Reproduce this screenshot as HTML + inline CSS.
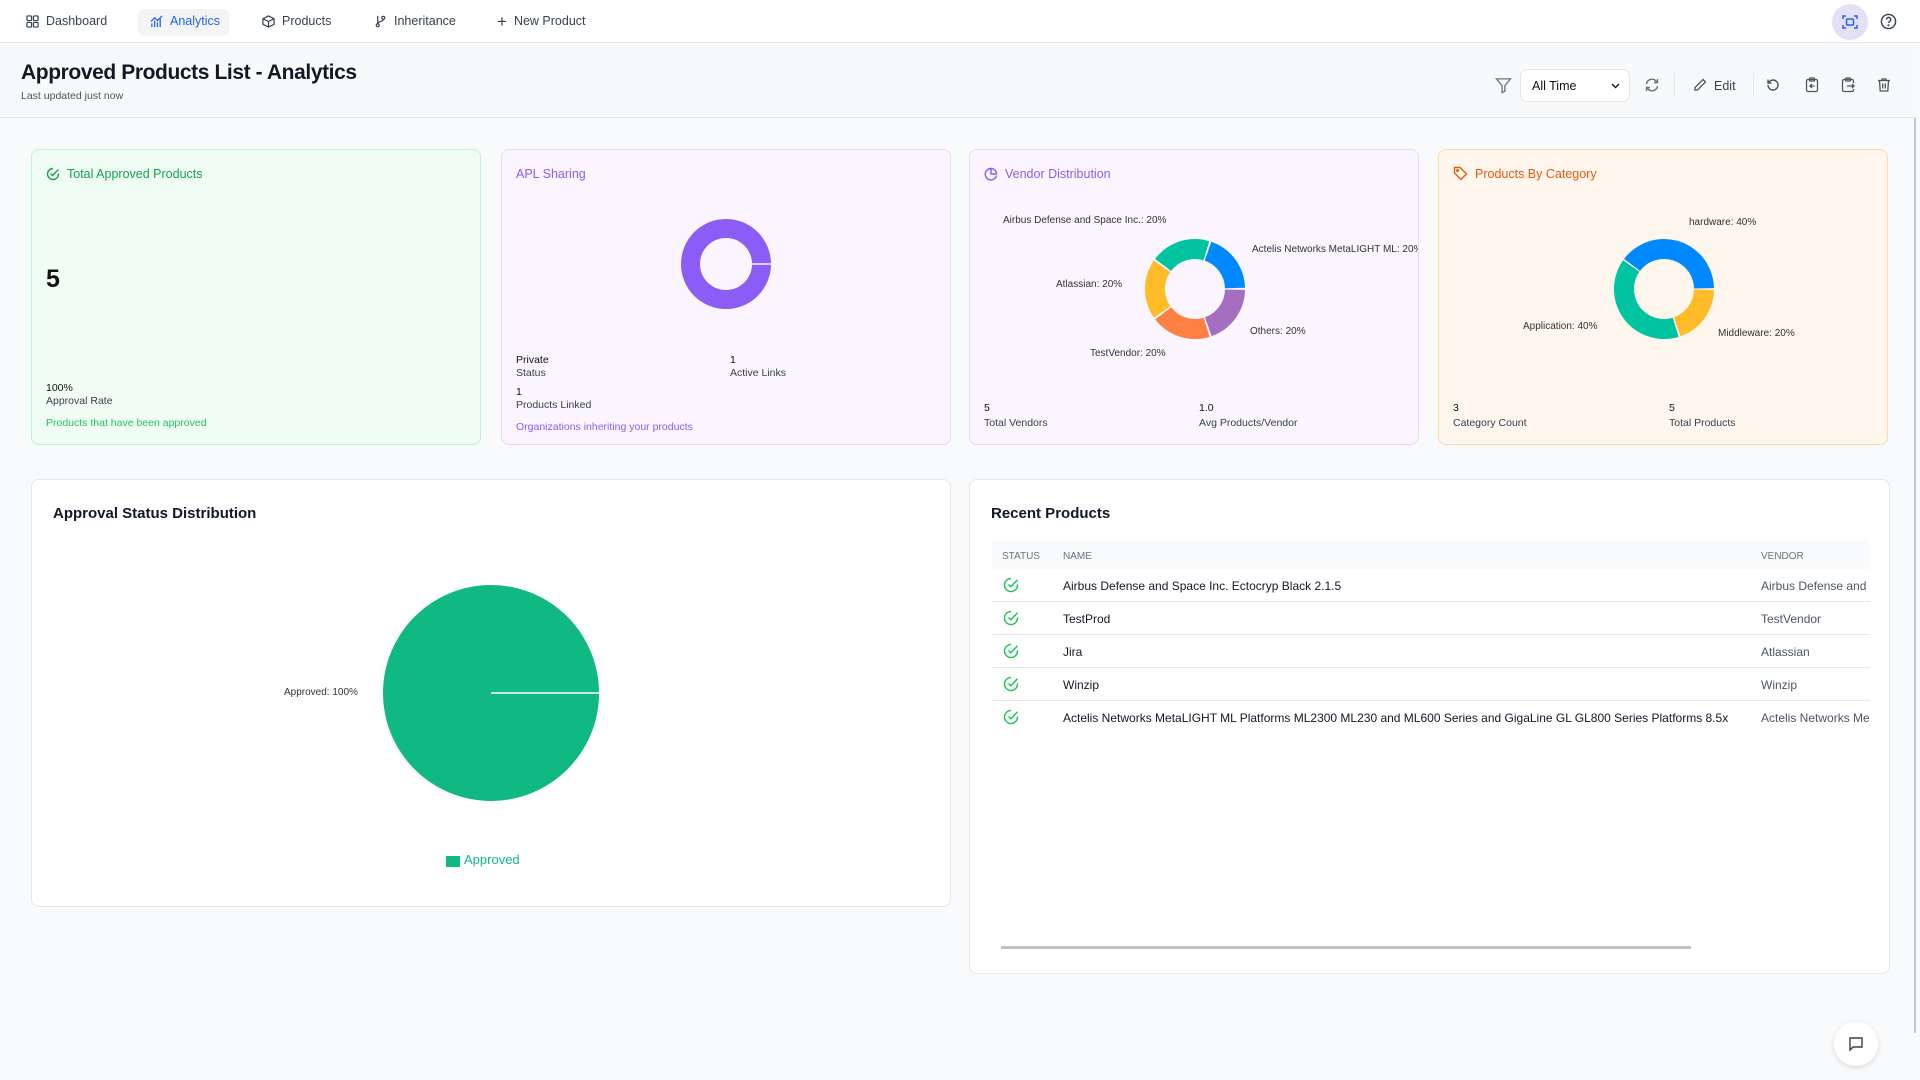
<!DOCTYPE html>
<html><head><meta charset="utf-8"><style>
*{box-sizing:border-box;margin:0;padding:0}
body{width:1920px;height:1080px;overflow:hidden;background:#f9fafb;font-family:"Liberation Sans",sans-serif;color:#111827;position:relative}
.a{position:absolute}
.nav{position:absolute;left:0;top:0;width:1920px;height:43px;background:#fff;border-bottom:1px solid #e5e7eb}
.ni{position:absolute;top:14px;font-size:12.5px;color:#374151;display:flex;align-items:center;gap:7px}
.hdr{position:absolute;left:0;top:43px;width:1916px;height:75px;background:#f8f9fb;border-bottom:1px solid #e5e7eb}
.card{position:absolute;top:149px;width:450px;height:296px;border-radius:8px;border:1.5px solid}
.t{position:absolute;font-size:12.5px;white-space:nowrap}
.s{position:absolute;font-size:10.5px;color:#374151;white-space:nowrap}
.lab{position:absolute;font-size:10px;color:#333;white-space:nowrap}
.panel{position:absolute;background:#fff;border:1px solid #e5e7eb;border-radius:8px;top:479px}
.row{position:absolute;left:22px;width:878px;height:33px;border-bottom:1px solid #e5e7eb;font-size:12px;color:#111827}
.row span{position:absolute;top:10px;white-space:nowrap}
</style></head><body>
<div class="nav">
 <div class="ni" style="left:26px"><svg width="13" height="13" viewBox="0 0 14 14" fill="none" stroke="#374151" stroke-width="1.3"><rect x="1" y="1" width="5" height="5" rx="1"/><rect x="8" y="1" width="5" height="5" rx="1"/><rect x="1" y="8" width="5" height="5" rx="1"/><rect x="8" y="8" width="5" height="5" rx="1"/></svg>Dashboard</div>
 <div class="a" style="left:138px;top:9px;width:91px;height:27px;background:#f3f4f6;border-radius:6px"></div>
 <div class="ni" style="left:150px;color:#2563eb"><svg width="13" height="13" viewBox="0 0 14 14" fill="none" stroke="#2563eb" stroke-width="1.4"><path d="M2 13V9M5 13V6M8 13V8M11 13V4M1 7l4-4 3 3 5-5"/></svg>Analytics</div>
 <div class="ni" style="left:262px"><svg width="13" height="13" viewBox="0 0 14 14" fill="none" stroke="#374151" stroke-width="1.3"><path d="M7 1l6 3v6l-6 3-6-3V4zM1 4l6 3 6-3M7 7v6"/></svg>Products</div>
 <div class="ni" style="left:374px"><svg width="13" height="13" viewBox="0 0 14 14" fill="none" stroke="#374151" stroke-width="1.3"><circle cx="4" cy="11" r="1.6"/><circle cx="10" cy="3" r="1.6"/><path d="M4 1v8.4M10 4.6c0 3-6 2-6 5"/></svg>Inheritance</div>
 <div class="ni" style="left:497px"><span style="font-size:17px;line-height:13px">+</span>New Product</div>
 <div class="a" style="left:1832px;top:4px;width:36px;height:36px;border-radius:50%;background:#e4e0f8"></div>
 <svg class="a" style="left:1842px;top:14px" width="16" height="16" viewBox="0 0 16 16" fill="none" stroke="#2563eb" stroke-width="1.5"><path d="M1 5V2h3M12 2h3v3M15 11v3h-3M4 14H1v-3"/><rect x="4.5" y="5" width="7" height="6" rx="1"/></svg>
 <svg class="a" style="left:1880px;top:13px" width="17" height="17" viewBox="0 0 18 18" fill="none" stroke="#374151" stroke-width="1.5"><circle cx="9" cy="9" r="7.5"/><path d="M6.8 7a2.3 2.3 0 114 1.5c-.8.6-1.8 1-1.8 2"/><circle cx="9" cy="13" r=".4" fill="#374151"/></svg>
</div>
<div class="a" style="left:1914px;top:43px;width:2px;height:990px;background:#c8c8c8"></div>
<div class="hdr">
 <div class="a" style="left:21px;top:18px;font-size:21px;font-weight:bold;color:#111827;letter-spacing:-0.4px">Approved Products List - Analytics</div>
 <div class="a" style="left:21px;top:47px;font-size:10.5px;color:#4b5563">Last updated just now</div>
 <svg class="a" style="left:1495px;top:34px" width="17" height="17" viewBox="0 0 18 18" fill="none" stroke="#6b7280" stroke-width="1.4"><path d="M1.5 2h15l-6 7v6l-3 1.5V9z"/></svg>
 <div class="a" style="left:1520px;top:26px;width:110px;height:33px;background:#fff;border:1px solid #e5e7eb;border-radius:7px;font-size:12.5px;padding:9px 11px;color:#111">All Time<svg style="position:absolute;right:9px;top:13px" width="9" height="6" viewBox="0 0 9 6" fill="none" stroke="#111" stroke-width="1.4"><path d="M1 1l3.5 3.5L8 1"/></svg></div>
 <svg class="a" style="left:1644px;top:34px" width="16" height="16" viewBox="0 0 16 16" fill="none" stroke="#6b7280" stroke-width="1.4"><path d="M2.5 7a5.5 5.5 0 019.5-3l1.5 1.5M13.5 9A5.5 5.5 0 014 12l-1.5-1.5M13.5 2v3.5H10M2.5 14v-3.5H6"/></svg>
 <div class="a" style="left:1674px;top:30px;width:1px;height:24px;background:#e5e7eb"></div>
 <svg class="a" style="left:1693px;top:35px" width="14" height="14" viewBox="0 0 14 14" fill="none" stroke="#4b5563" stroke-width="1.3"><path d="M10 1.5l2.5 2.5L4.5 12H2v-2.5z"/></svg>
 <div class="a" style="left:1714px;top:36px;font-size:12.5px;color:#374151">Edit</div>
 <div class="a" style="left:1753px;top:30px;width:1px;height:24px;background:#e5e7eb"></div>
 <svg class="a" style="left:1766px;top:35px" width="14" height="14" viewBox="0 0 14 14" fill="none" stroke="#4b5563" stroke-width="1.4"><path d="M2 7a5 5 0 105-5 5 5 0 00-3.5 1.5L2 5M2 1.5V5h3.5"/></svg>
 <svg class="a" style="left:1805px;top:34px" width="14" height="16" viewBox="0 0 14 16" fill="none" stroke="#4b5563" stroke-width="1.3"><rect x="1.5" y="2.5" width="11" height="12" rx="1.5"/><rect x="4.5" y="1" width="5" height="3" rx=".8"/><path d="M9.5 9H5M7 7L5 9l2 2"/></svg>
 <svg class="a" style="left:1841px;top:34px" width="14" height="16" viewBox="0 0 14 16" fill="none" stroke="#4b5563" stroke-width="1.3"><path d="M12.5 6V4a1.5 1.5 0 00-1.5-1.5H3A1.5 1.5 0 001.5 4v9A1.5 1.5 0 003 14.5h8a1.5 1.5 0 001.5-1.5v-1"/><rect x="4.5" y="1" width="5" height="3" rx=".8"/><path d="M6 9h7M11 7l2 2-2 2"/></svg>
 <svg class="a" style="left:1877px;top:34px" width="14" height="16" viewBox="0 0 14 16" fill="none" stroke="#4b5563" stroke-width="1.3"><path d="M1 3.5h12M5 3.5V2h4v1.5M2.5 3.5l.7 10.5h7.6l.7-10.5M5.7 6.5v5M8.3 6.5v5"/></svg>
</div>

<!-- card 1 -->
<div class="card" style="left:31px;background:#f0fdf4;border-color:#bbf7d0">
 <svg class="a" style="left:14px;top:17px" width="14" height="14" viewBox="0 0 14 14" fill="none" stroke="#16a34a" stroke-width="1.4"><path d="M12.5 6.5V7A5.5 5.5 0 117 1.5"/><path d="M4.5 6.5l2 2 6-6"/></svg>
 <div class="t" style="left:35px;top:17px;color:#16a34a">Total Approved Products</div>
 <div class="a" style="left:14px;top:115px;font-size:25px;font-weight:bold;color:#111">5</div>
 <div class="s" style="left:14px;top:232px;color:#111">100%</div>
 <div class="s" style="left:14px;top:245px">Approval Rate</div>
 <div class="s" style="left:14px;top:267px;color:#22c55e">Products that have been approved</div>
</div>
<!-- card 2 -->
<div class="card" style="left:501px;background:#faf5ff;border-color:#e9d5ff">
 <div class="t" style="left:14px;top:17px;color:#8b5cf6">APL Sharing</div>
 <svg class="a" style="left:0;top:0" width="450" height="296"><g transform="translate(224,114)"><circle r="35.5" fill="none" stroke="#8b5cf6" stroke-width="19"/><line x1="26" y1="0" x2="46" y2="0" stroke="#faf5ff" stroke-width="1.5"/></g></svg>
 <div class="s" style="left:14px;top:204px;color:#111">Private</div>
 <div class="s" style="left:14px;top:217px">Status</div>
 <div class="s" style="left:228px;top:204px;color:#111">1</div>
 <div class="s" style="left:228px;top:217px">Active Links</div>
 <div class="s" style="left:14px;top:236px;color:#111">1</div>
 <div class="s" style="left:14px;top:249px">Products Linked</div>
 <div class="s" style="left:14px;top:271px;color:#8b5cf6">Organizations inheriting your products</div>
</div>
<!-- card 3 -->
<div class="card" style="left:969px;background:#faf5ff;border-color:#e9d5ff;overflow:hidden">
 <svg class="a" style="left:14px;top:17px" width="14" height="14" viewBox="0 0 14 14" fill="none" stroke="#8b5cf6" stroke-width="1.4"><path d="M12.5 8.5A5.7 5.7 0 117 1.5"/><path d="M7 1.5A5.5 5.5 0 0112.5 7H7z"/></svg>
 <div class="t" style="left:35px;top:17px;color:#8b5cf6">Vendor Distribution</div>
 <svg class="a" style="left:0;top:0" width="450" height="296"><g transform="translate(225,139)" fill="none" stroke-width="20">
  <circle r="40" stroke="#0088FE" stroke-dasharray="48.5 300" transform="rotate(289)"/>
  <circle r="40" stroke="#a46fc0" stroke-dasharray="48.5 300" transform="rotate(1)"/>
  <circle r="40" stroke="#FF8042" stroke-dasharray="48.5 300" transform="rotate(73)"/>
  <circle r="40" stroke="#FFBB28" stroke-dasharray="48.5 300" transform="rotate(145)"/>
  <circle r="40" stroke="#00C49F" stroke-dasharray="48.5 300" transform="rotate(217)"/>
 </g></svg>
 <div class="lab" style="left:33px;top:65px">Airbus Defense and Space Inc.: 20%</div>
 <div class="lab" style="left:282px;top:94px">Actelis Networks MetaLIGHT ML: 20%</div>
 <div class="lab" style="left:86px;top:129px">Atlassian: 20%</div>
 <div class="lab" style="left:280px;top:176px">Others: 20%</div>
 <div class="lab" style="left:120px;top:198px">TestVendor: 20%</div>
 <div class="s" style="left:14px;top:252px;color:#111">5</div>
 <div class="s" style="left:14px;top:267px">Total Vendors</div>
 <div class="s" style="left:229px;top:252px;color:#111">1.0</div>
 <div class="s" style="left:229px;top:267px">Avg Products/Vendor</div>
</div>
<!-- card 4 -->
<div class="card" style="left:1438px;background:#fff7ed;border-color:#fed7aa">
 <svg class="a" style="left:14px;top:16px" width="15" height="15" viewBox="0 0 15 15" fill="none" stroke="#ea580c" stroke-width="1.4"><path d="M1.5 1.5h5.5l6.5 6.5-5.5 5.5L1.5 7z"/><circle cx="4.5" cy="4.5" r=".8"/></svg>
 <div class="t" style="left:36px;top:17px;color:#ea580c">Products By Category</div>
 <svg class="a" style="left:0;top:0" width="450" height="296"><g transform="translate(225,139)" fill="none" stroke-width="20">
  <circle r="40" stroke="#0088FE" stroke-dasharray="99 300" transform="rotate(217)"/>
  <circle r="40" stroke="#00C49F" stroke-dasharray="99 300" transform="rotate(73)"/>
  <circle r="40" stroke="#FFBB28" stroke-dasharray="48.5 300" transform="rotate(1)"/>
 </g></svg>
 <div class="lab" style="left:250px;top:67px">hardware: 40%</div>
 <div class="lab" style="left:84px;top:171px">Application: 40%</div>
 <div class="lab" style="left:279px;top:178px">Middleware: 20%</div>
 <div class="s" style="left:14px;top:252px;color:#111">3</div>
 <div class="s" style="left:14px;top:267px">Category Count</div>
 <div class="s" style="left:230px;top:252px;color:#111">5</div>
 <div class="s" style="left:230px;top:267px">Total Products</div>
</div>

<!-- bottom left -->
<div class="panel" style="left:31px;width:920px;height:428px">
 <div class="a" style="left:21px;top:25px;font-size:15px;font-weight:bold">Approval Status Distribution</div>
 <svg class="a" style="left:0;top:0" width="920" height="428"><circle cx="459" cy="213" r="108" fill="#10b981"/><line x1="459" y1="213" x2="567" y2="213" stroke="#fff" stroke-width="1.5"/></svg>
 <div class="lab" style="left:252px;top:207px;color:#333">Approved: 100%</div>
 <div class="a" style="left:414px;top:376px;width:14px;height:11px;background:#10b981"></div>
 <div class="a" style="left:432px;top:372px;font-size:13px;color:#10b981">Approved</div>
</div>

<!-- bottom right -->
<div class="panel" style="left:969px;width:921px;height:495px;overflow:hidden">
 <div class="a" style="left:21px;top:25px;font-size:15px;font-weight:bold">Recent Products</div>
 <div class="a" style="left:22px;top:61px;width:878px;height:28px;background:#f9fafb;font-size:10px;color:#6b7280">
  <span class="a" style="left:10px;top:10px">STATUS</span><span class="a" style="left:71px;top:10px">NAME</span><span class="a" style="left:769px;top:10px">VENDOR</span>
 </div>
 <div class="row" style="top:89px"><svg class="a" style="left:11px;top:8px" width="16" height="16" viewBox="0 0 16 16" fill="none" stroke="#22c55e" stroke-width="1.5"><path d="M14.5 7.4V8A6.5 6.5 0 118 1.5"/><path d="M5.5 7.5l2.3 2.3 6.7-7"/></svg><span style="left:71px">Airbus Defense and Space Inc. Ectocryp Black 2.1.5</span><span style="left:769px;color:#4b5563">Airbus Defense and</span></div>
 <div class="row" style="top:122px"><svg class="a" style="left:11px;top:8px" width="16" height="16" viewBox="0 0 16 16" fill="none" stroke="#22c55e" stroke-width="1.5"><path d="M14.5 7.4V8A6.5 6.5 0 118 1.5"/><path d="M5.5 7.5l2.3 2.3 6.7-7"/></svg><span style="left:71px">TestProd</span><span style="left:769px;color:#4b5563">TestVendor</span></div>
 <div class="row" style="top:155px"><svg class="a" style="left:11px;top:8px" width="16" height="16" viewBox="0 0 16 16" fill="none" stroke="#22c55e" stroke-width="1.5"><path d="M14.5 7.4V8A6.5 6.5 0 118 1.5"/><path d="M5.5 7.5l2.3 2.3 6.7-7"/></svg><span style="left:71px">Jira</span><span style="left:769px;color:#4b5563">Atlassian</span></div>
 <div class="row" style="top:188px"><svg class="a" style="left:11px;top:8px" width="16" height="16" viewBox="0 0 16 16" fill="none" stroke="#22c55e" stroke-width="1.5"><path d="M14.5 7.4V8A6.5 6.5 0 118 1.5"/><path d="M5.5 7.5l2.3 2.3 6.7-7"/></svg><span style="left:71px">Winzip</span><span style="left:769px;color:#4b5563">Winzip</span></div>
 <div class="row" style="top:221px;border-bottom:none"><svg class="a" style="left:11px;top:8px" width="16" height="16" viewBox="0 0 16 16" fill="none" stroke="#22c55e" stroke-width="1.5"><path d="M14.5 7.4V8A6.5 6.5 0 118 1.5"/><path d="M5.5 7.5l2.3 2.3 6.7-7"/></svg><span style="left:71px">Actelis Networks MetaLIGHT ML Platforms ML2300 ML230 and ML600 Series and GigaLine GL GL800 Series Platforms 8.5x</span><span style="left:769px;color:#4b5563;width:109px;overflow:hidden">Actelis Networks Me</span></div>
 <div class="a" style="left:31px;top:466px;width:690px;height:3px;background:#c1c1c1"></div>
</div>

<div class="a" style="left:1834px;top:1022px;width:44px;height:44px;border-radius:50%;background:#fff;box-shadow:0 2px 6px rgba(0,0,0,.12)"></div>
<svg class="a" style="left:1848px;top:1036px" width="16" height="16" viewBox="0 0 16 16" fill="none" stroke="#374151" stroke-width="1.4"><path d="M2 2h12v9H5l-3 3z"/></svg>
</body></html>
